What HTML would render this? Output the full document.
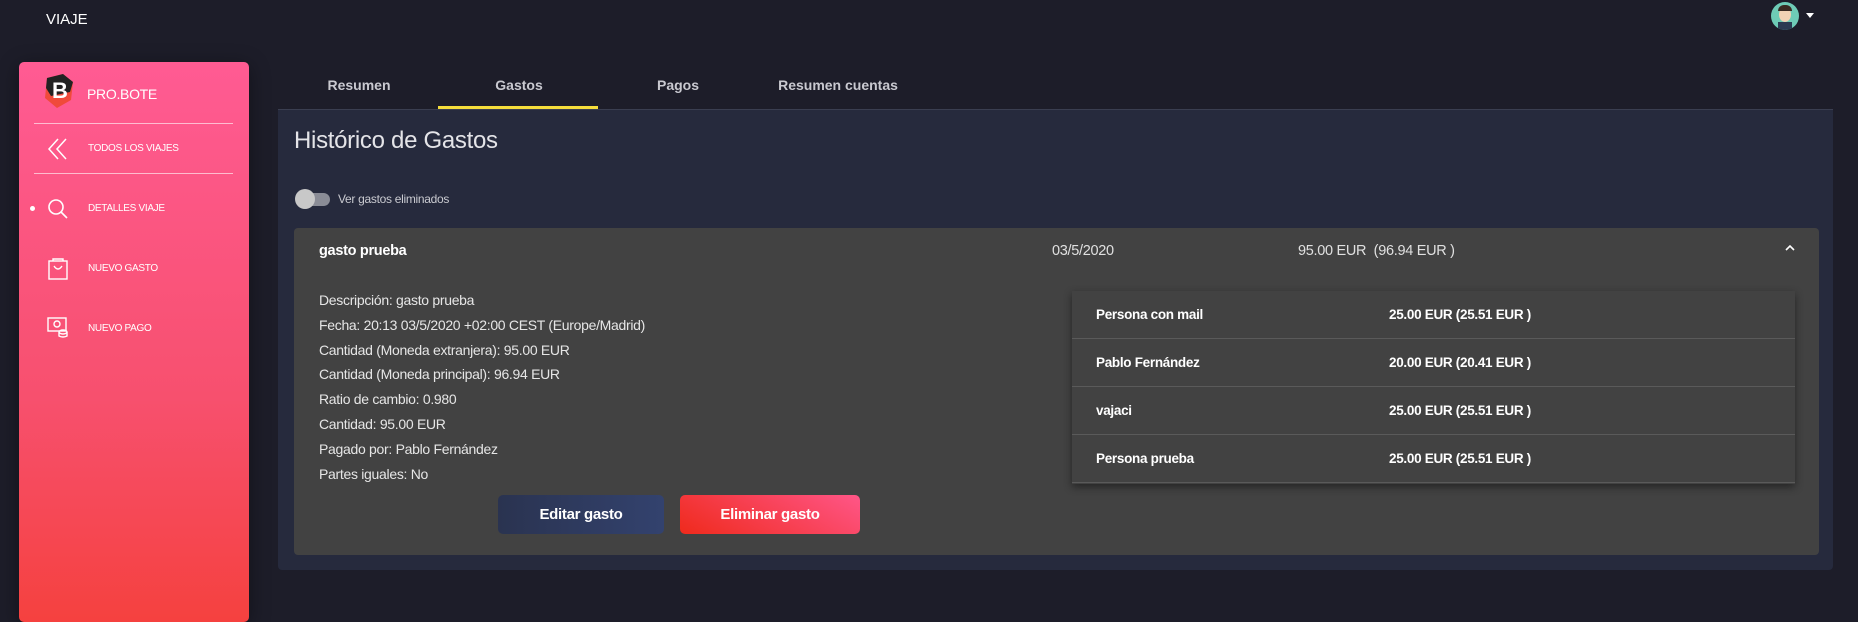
<!DOCTYPE html>
<html><head><meta charset="utf-8"><style>
*{box-sizing:border-box;margin:0;padding:0}
body{width:1858px;height:611px;background:#1d1d29;font-family:"Liberation Sans",sans-serif;position:relative;overflow:hidden;color:#fff}
.abs{position:absolute}
.side{left:19px;top:62px;width:230px;height:560px;border-radius:5px;background:linear-gradient(180deg,#ff5b93 0%,#f7506e 60%,#f5413f 100%);box-shadow:0 4px 20px rgba(0,0,0,.4)}
.side .t{position:absolute;left:69px;font-size:10px;color:#fff;text-transform:uppercase;letter-spacing:-.3px}
.hr{position:absolute;left:15px;width:199px;height:1px;background:rgba(255,255,255,.6)}
.tab{top:77px;font-size:14px;font-weight:bold;color:#c9c9d0;transform:translateX(-50%)}
.panel{left:278px;top:110px;width:1555px;height:460px;background:#262a3d;border-radius:0 0 4px 4px}
.card{left:294px;top:228px;width:1525px;height:327px;background:#424242;border-radius:4px}
.d{position:absolute;left:319px;font-size:14px;color:#e6e6e6;letter-spacing:-.3px}
.row{position:absolute;left:0;width:723px;height:48px;border-bottom:1px solid #5a5a5a}
.row span{position:absolute;top:16px;font-size:13.5px;color:#fff;font-weight:bold;letter-spacing:-.3px}
.btn{position:absolute;top:495px;height:39px;border-radius:5px;font-weight:bold;font-size:15px;text-align:center;line-height:39px;color:#fff;letter-spacing:-.3px}
</style></head><body>
<div class="abs" style="left:46px;top:11px;font-size:15px">VIAJE</div>
<div class="abs" style="left:1771px;top:2px;width:28px;height:28px;border-radius:50%;background:#6ecbb6;overflow:hidden">
<div style="position:absolute;left:8px;top:5px;width:12px;height:15px;border-radius:50%;background:#f2d2b4"></div>
<div style="position:absolute;left:7px;top:3px;width:14px;height:6px;border-radius:6px 6px 0 0;background:#3a2a22"></div>
<div style="position:absolute;left:7px;top:20px;width:14px;height:10px;background:#2b3b52"></div></div>
<div class="abs" style="left:1806px;top:13px;width:0;height:0;border-left:4px solid transparent;border-right:4px solid transparent;border-top:5px solid #fff"></div>

<div class="abs side">
 <svg class="abs" style="left:24px;top:12px" width="32" height="34" viewBox="0 0 32 34"><polygon points="4,4 20,0 30,8 28,26 14,34 2,24" fill="#f04a3a"/><polygon points="4,4 20,0 30,8 27,18 8,22 3,14" fill="#222"/><text x="9" y="24" font-size="22" font-weight="bold" fill="#fff" font-family="Liberation Sans">B</text></svg>
 <div class="abs" style="left:68px;top:24px;font-size:14px;letter-spacing:-.3px">PRO.BOTE</div>
 <div class="hr" style="top:61px"></div>
 <svg class="abs" style="left:28px;top:75px" width="22" height="24" viewBox="0 0 22 24" fill="none" stroke="#fff" stroke-width="1.5"><path d="M11 2 2 12 11 22M19 2 10 12 19 22"/></svg>
 <div class="t" style="top:81px">Todos los viajes</div>
 <div class="hr" style="top:111px"></div>
 <div class="abs" style="left:11px;top:144px;width:5px;height:5px;border-radius:50%;background:#fff"></div>
 <svg class="abs" style="left:28px;top:136px" width="22" height="22" viewBox="0 0 22 22" fill="none" stroke="#fff" stroke-width="1.6"><circle cx="9" cy="9" r="7"/><path d="M14 14 20 20"/></svg>
 <div class="t" style="top:141px">Detalles viaje</div>
 <svg class="abs" style="left:29px;top:196px" width="20" height="22" viewBox="0 0 20 22" fill="none" stroke="#fff" stroke-width="1.4"><rect x="1" y="3" width="18" height="18"/><path d="M5 3V1h10v2M6 8q4 6 8 0"/></svg>
 <div class="t" style="top:201px">Nuevo gasto</div>
 <svg class="abs" style="left:28px;top:254px" width="22" height="22" viewBox="0 0 22 22" fill="none" stroke="#fff" stroke-width="1.4"><rect x="1" y="2" width="18" height="13"/><circle cx="10" cy="8" r="3"/><ellipse cx="16" cy="16" rx="4" ry="2"/><path d="M12 16v4q4 2 8 0v-4"/></svg>
 <div class="t" style="top:261px">Nuevo pago</div>
</div>

<div class="abs tab" style="left:359px">Resumen</div>
<div class="abs tab" style="left:519px">Gastos</div>
<div class="abs tab" style="left:678px">Pagos</div>
<div class="abs tab" style="left:838px">Resumen cuentas</div>
<div class="abs" style="left:278px;top:109px;width:1555px;height:1px;background:#3a3e50"></div>
<div class="abs panel"></div>
<div class="abs" style="left:438px;top:106px;width:160px;height:3px;background:#f5dd3b"></div>
<div class="abs" style="left:294px;top:127px;font-size:24px;color:#e4e4e8;letter-spacing:-.3px">Histórico de Gastos</div>
<div class="abs" style="left:298px;top:193px;width:32px;height:13px;border-radius:7px;background:#8a8c96"></div>
<div class="abs" style="left:295px;top:189px;width:20px;height:20px;border-radius:50%;background:#c8c8c8"></div>
<div class="abs" style="left:338px;top:192px;font-size:12px;color:#c9cad0;letter-spacing:-.3px">Ver gastos eliminados</div>

<div class="abs card"></div>
<div class="abs" style="left:319px;top:243px;font-size:14.5px;font-weight:bold;letter-spacing:-.3px">gasto prueba</div>
<div class="abs" style="left:1052px;top:243px;font-size:14.5px;color:#e0e0e0;letter-spacing:-.3px">03/5/2020</div>
<div class="abs" style="left:1298px;top:243px;font-size:14.5px;color:#e0e0e0;letter-spacing:-.3px">95.00 EUR&nbsp; (96.94 EUR )</div>
<svg class="abs" style="left:1784px;top:243px" width="12" height="9" viewBox="0 0 12 9" fill="none" stroke="#fff" stroke-width="1.6"><path d="M2 7 6 3 10 7"/></svg>
<div class="d" style="top:292px">Descripción: gasto prueba</div>
<div class="d" style="top:317px">Fecha: 20:13 03/5/2020 +02:00 CEST (Europe/Madrid)</div>
<div class="d" style="top:342px">Cantidad (Moneda extranjera): 95.00 EUR</div>
<div class="d" style="top:366px">Cantidad (Moneda principal): 96.94 EUR</div>
<div class="d" style="top:391px">Ratio de cambio: 0.980</div>
<div class="d" style="top:416px">Cantidad: 95.00 EUR</div>
<div class="d" style="top:441px">Pagado por: Pablo Fernández</div>
<div class="d" style="top:466px">Partes iguales: No</div>
<div class="btn" style="left:498px;width:166px;background:linear-gradient(90deg,#2a3350,#33426e)">Editar gasto</div>
<div class="btn" style="left:680px;width:180px;background:linear-gradient(30deg,#ef2a1c,#ff5688)">Eliminar gasto</div>

<div class="abs" style="left:1072px;top:291px;width:723px;height:193px;background:#424242;box-shadow:0 3px 8px rgba(0,0,0,.45)">
 <div class="row" style="top:0"><span style="left:24px">Persona con mail</span><span style="left:317px">25.00 EUR (25.51 EUR )</span></div>
 <div class="row" style="top:48px"><span style="left:24px">Pablo Fernández</span><span style="left:317px">20.00 EUR (20.41 EUR )</span></div>
 <div class="row" style="top:96px"><span style="left:24px">vajaci</span><span style="left:317px">25.00 EUR (25.51 EUR )</span></div>
 <div class="row" style="top:144px"><span style="left:24px">Persona prueba</span><span style="left:317px">25.00 EUR (25.51 EUR )</span></div>
</div>
</body></html>
